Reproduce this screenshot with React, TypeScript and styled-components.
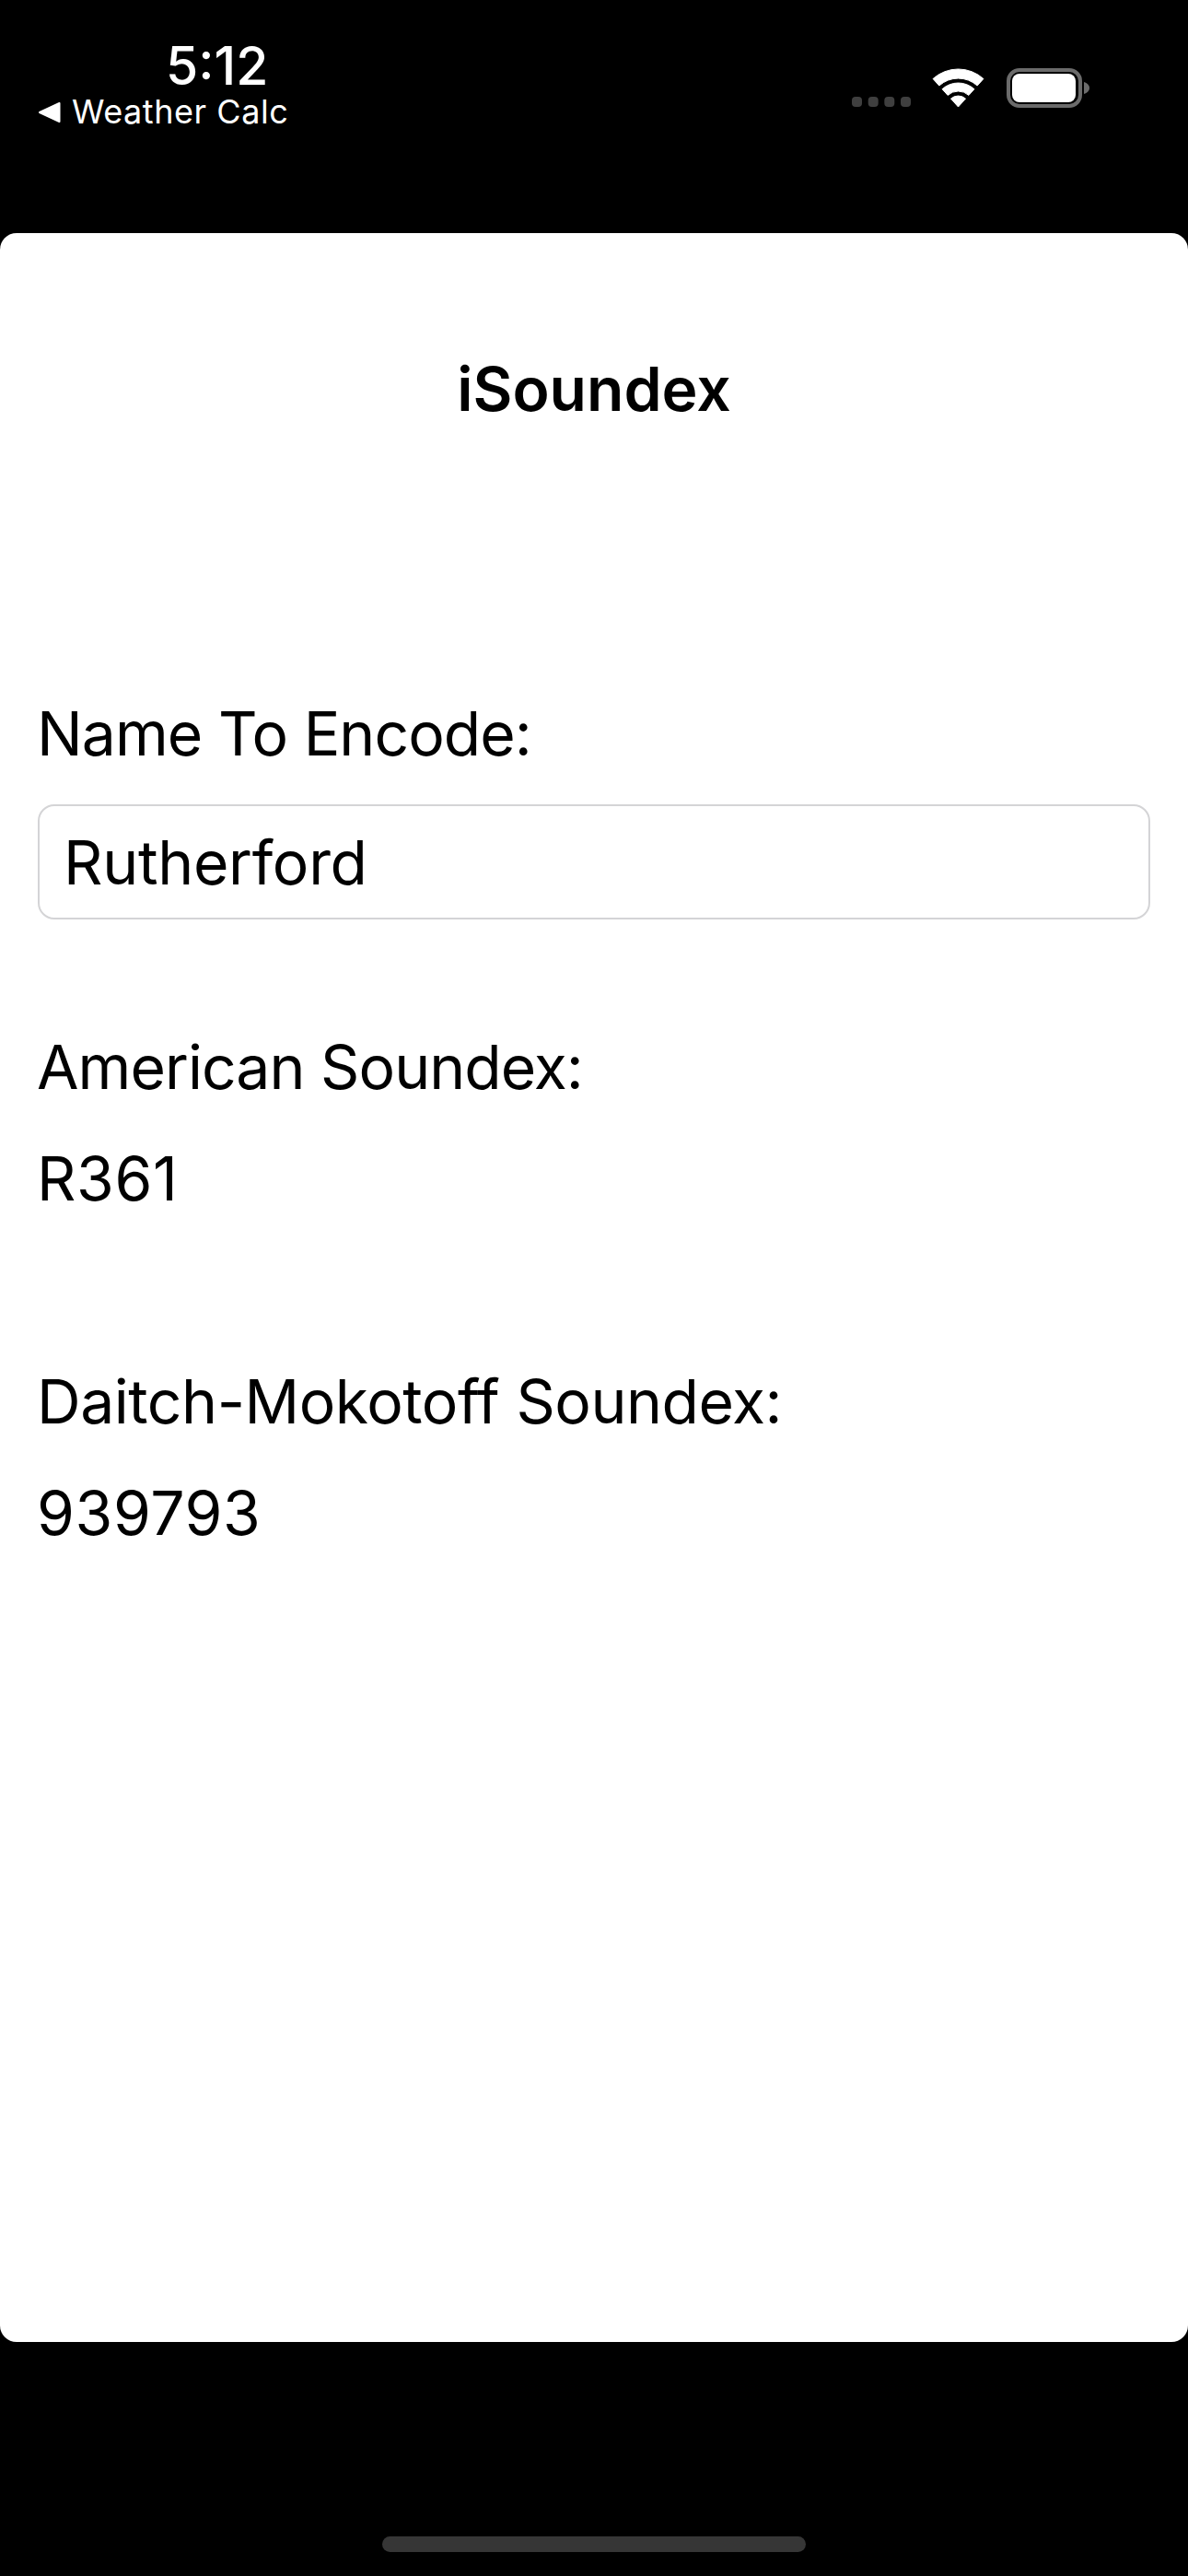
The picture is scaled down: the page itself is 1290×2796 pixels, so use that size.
import styled, { createGlobalStyle } from "styled-components";

const GlobalStyle = createGlobalStyle`
  html, body {
    margin: 0;
    background: #000;
  }
  body {
    font-family: Inter, "Liberation Sans", sans-serif;
  }
`;

const Screen = styled.div`
  width: 1290px;
  height: 2796px;
  background: #000;
  display: flex;
  flex-direction: column;
`;

const StatusBar = styled.div`
  height: 253px;
  flex: none;
  display: flex;
  justify-content: space-between;
  color: #fff;
  box-sizing: border-box;
  padding: 44px 100px 0 41px;
`;

const StatusLeft = styled.div`
  display: flex;
  flex-direction: column;
  align-items: flex-start;
`;

const Time = styled.div`
  font-size: 57px;
  line-height: 56px;
  font-weight: 500;
  margin-left: 139px;
`;

const BackLink = styled.div`
  display: flex;
  align-items: center;
  gap: 12px;
  font-size: 36px;
  line-height: 43px;
  letter-spacing: 0.55px;
`;

const StatusRight = styled.div`
  padding-top: 26px;
`;

const Card = styled.main`
  height: 2289px;
  flex: none;
  background: #fff;
  border-radius: 18px;
  box-sizing: border-box;
  padding: 0 41px;
  color: #000;
`;

const Title = styled.h1`
  margin: 0;
  padding-top: 136px;
  font-size: 66px;
  line-height: 66px;
  font-weight: 600;
  text-align: center;
`;

const Field = styled.section<{ $top: number }>`
  margin-top: ${(p) => p.$top}px;
`;

const Label = styled.div<{ $tracking: number }>`
  font-size: 66px;
  line-height: 80px;
  margin-left: -1px;
  letter-spacing: ${(p) => p.$tracking}px;
`;

const Value = styled.div`
  font-size: 66px;
  line-height: 80px;
  margin-top: 41px;
  margin-left: -1px;
  letter-spacing: 0.6px;
`;

const NameInput = styled.div`
  height: 125px;
  margin-top: 37px;
  box-sizing: border-box;
  border: 2px solid #d4d4d6;
  border-radius: 18px;
  padding-left: 26px;
  font-size: 66px;
  line-height: 123px;
  letter-spacing: -0.3px;
`;

const HomeArea = styled.div`
  flex: 1;
  display: flex;
  justify-content: center;
  padding-top: 211px;
`;

const HomeBar = styled.div`
  width: 460px;
  height: 17px;
  border-radius: 9px;
  background: #363636;
`;

const StatusIcons = () => (
  <svg width="270" height="52" viewBox="0 0 270 52">
    <g fill="#3f3f3f">
      <rect x="5" y="35" width="11" height="11" rx="4" />
      <rect x="22.7" y="35" width="11" height="11" rx="4" />
      <rect x="40.3" y="35" width="11" height="11" rx="4" />
      <rect x="58" y="35" width="11" height="11" rx="4" />
    </g>
    <g fill="#fff" stroke="#fff" strokeWidth="1" strokeLinejoin="round">
      <path d="M93.1 15.5 A41 41 0 0 1 147.9 15.5 L141.2 23 A31 31 0 0 0 99.8 23 Z" />
      <path d="M103.1 26.7 A26 26 0 0 1 137.9 26.7 L131.9 33.4 A17 17 0 0 0 109.1 33.4 Z" />
      <path d="M112.5 37.1 A12 12 0 0 1 128.5 37.1 L120.5 46 Z" />
    </g>
    <rect x="175" y="6" width="78" height="39" rx="12" fill="none" stroke="#6b6b6b" strokeWidth="4" />
    <rect x="179" y="10" width="69" height="31" rx="8" fill="#fff" />
    <path d="M257 19 C 260.5 20 263 22.5 263 25.5 C 263 28.5 260.5 31 257 32 Z" fill="#6b6b6b" />
  </svg>
);

const BackArrow = () => (
  <svg width="25" height="24" viewBox="0 0 25 24">
    <path d="M23.5 2 V22 L2 12 Z" fill="#fff" stroke="#fff" strokeWidth="2" strokeLinejoin="round" />
  </svg>
);

export default function App() {
  return (
    <>
      <GlobalStyle />
      <Screen>
        <StatusBar>
          <StatusLeft>
            <Time>5:12</Time>
            <BackLink>
              <BackArrow />
              Weather Calc
            </BackLink>
          </StatusLeft>
          <StatusRight>
            <StatusIcons />
          </StatusRight>
        </StatusBar>
        <Card>
          <Title>iSoundex</Title>
          <Field $top={301}>
            <Label $tracking={-0.95}>Name To Encode:</Label>
            <NameInput>Rutherford</NameInput>
          </Field>
          <Field $top={120}>
            <Label $tracking={-0.95}>American Soundex:</Label>
            <Value>R361</Value>
          </Field>
          <Field $top={162}>
            <Label $tracking={-0.45}>Daitch-Mokotoff Soundex:</Label>
            <Value>939793</Value>
          </Field>
        </Card>
        <HomeArea>
          <HomeBar />
        </HomeArea>
      </Screen>
    </>
  );
}
